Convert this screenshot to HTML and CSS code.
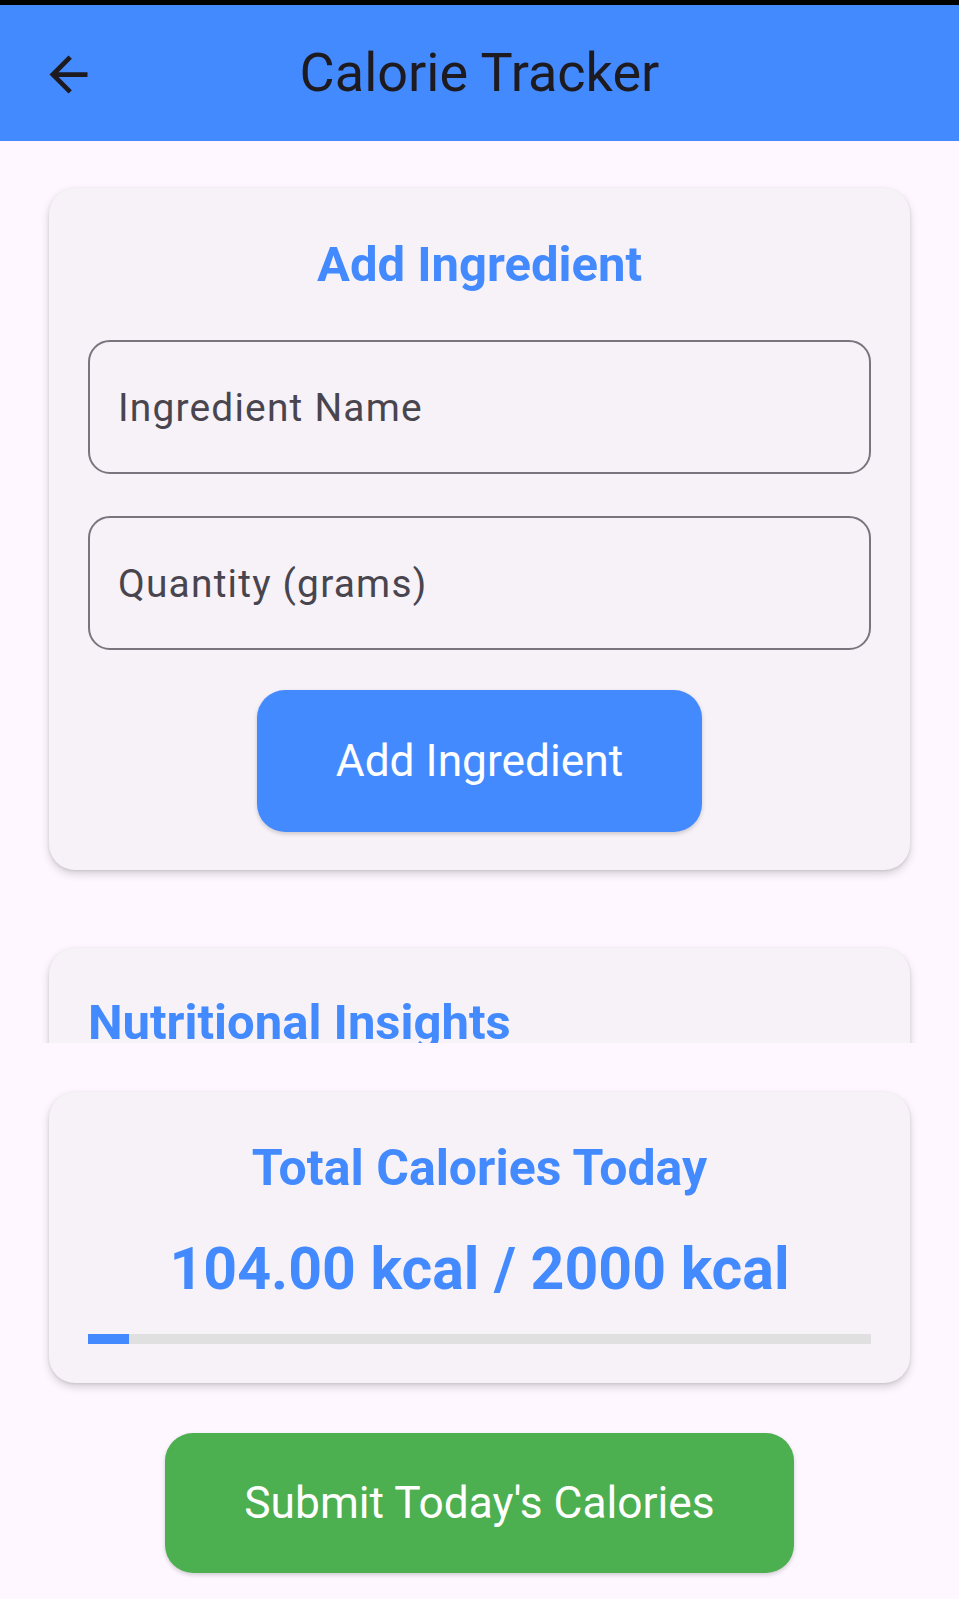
FILE: index.html
```html
<!DOCTYPE html>
<html lang="en">
<head>
<meta charset="utf-8">
<title>Calorie Tracker</title>
<link rel="stylesheet" href="styles.css">
</head>
<body>
<div class="screen">
  <div class="status-bar"></div>
  <header class="app-bar">
    <div class="app-bar-lead">
      <svg class="back-icon" viewBox="0 0 24 24" width="57" height="57" aria-hidden="true">
        <path d="M20 11H7.83l5.59-5.59L12 4l-8 8 8 8 1.41-1.41L7.83 13H20v-2z" fill="#1d1b20"/>
      </svg>
    </div>
    <h1 class="app-title">Calorie Tracker</h1>
    <div></div>
  </header>

  <main class="scroll-area">
    <section class="card card-add">
      <h2 class="card-title center">Add Ingredient</h2>
      <div class="field"><span class="field-label">Ingredient Name</span></div>
      <div class="field field-second"><span class="field-label">Quantity (grams)</span></div>
      <div class="btn-row">
        <button class="btn btn-blue">Add Ingredient</button>
      </div>
    </section>

    <section class="card card-insights">
      <h2 class="card-title">Nutritional Insights</h2>
    </section>
  </main>

  <footer class="bottom-area">
    <section class="card card-total">
      <h2 class="card-title card-title-lg center">Total Calories Today</h2>
      <div class="kcal">104.00 kcal / 2000 kcal</div>
      <div class="progress"><div class="progress-fill" style="width:5.2%"></div></div>
    </section>
    <div class="btn-row submit-row">
      <button class="btn btn-green">Submit Today's Calories</button>
    </div>
  </footer>
</div>
</body>
</html>
```

FILE: styles.css
```css
* {
  box-sizing: border-box;
}

html, body {
  margin: 0;
  padding: 0;
}

body {
  background: #fef7ff;
  font-family: Roboto, "Liberation Sans", Arial, sans-serif;
  width: 959px;
  height: 1599px;
  overflow: hidden;
}

.screen {
  display: flex;
  flex-direction: column;
  height: 1599px;
}

.status-bar {
  height: 5px;
  background: #000;
  flex: none;
}

.app-bar {
  flex: none;
  height: 136px;
  background: #448aff;
  display: grid;
  grid-template-columns: 1fr auto 1fr;
  align-items: center;
}

.app-bar-lead {
  padding-left: 40px;
  display: flex;
  align-items: center;
  padding-top: 2px;
}

.back-icon {
  display: block;
}

.app-title {
  margin: 0;
  font-size: 54px;
  font-weight: 400;
  color: #1d1b20;
  line-height: 136px;
}

.scroll-area {
  flex: none;
  height: 902px;
  overflow: hidden;
  padding: 47px 49px 0;
  display: flex;
  flex-direction: column;
  gap: 78px;
}

.card {
  background: #f6f2f8;
  border-radius: 26px;
  box-shadow: 0 4px 8px rgba(0, 0, 0, 0.16), 0 1px 3px rgba(0, 0, 0, 0.10);
  padding: 0 39px;
}

.card-title {
  margin: 0;
  font-size: 49px;
  font-weight: 700;
  line-height: 60px;
  color: #448aff;
}

.card-title-lg {
  font-size: 50px;
}

.center {
  text-align: center;
}

.card-add {
  flex: none;
  padding-top: 47px;
  padding-bottom: 38px;
}

.card-add .card-title {
  margin-bottom: 45px;
}

.field {
  height: 134px;
  border: 2px solid #79747e;
  border-radius: 22px;
  display: flex;
  align-items: center;
  padding-left: 28px;
}

.field-second {
  margin-top: 42px;
}

.field-label {
  font-size: 38.9px;
  letter-spacing: 1.2px;
  color: #49454f;
}

.btn-row {
  display: flex;
  justify-content: center;
  margin-top: 40px;
}

.btn {
  border: none;
  height: 142px;
  padding: 0 79px;
  border-radius: 28px;
  font-family: inherit;
  font-size: 44.3px;
  font-weight: 400;
  color: #fff;
  box-shadow: 0 2px 4px rgba(0, 0, 0, 0.18);
}

.btn-blue {
  background: #448aff;
}

.btn-green {
  background: #4caf50;
}

.card-insights {
  flex: none;
  padding-top: 45px;
  padding-bottom: 200px;
}

.bottom-area {
  flex: none;
  padding: 49px 49px 0;
}

.card-total {
  padding-top: 46px;
  padding-bottom: 39px;
}

.kcal {
  margin-top: 36px;
  text-align: center;
  font-size: 59px;
  font-weight: 700;
  line-height: 70px;
  color: #448aff;
}

.progress {
  margin-top: 30px;
  height: 10px;
  background: #e0e0e0;
}

.progress-fill {
  height: 100%;
  background: #448aff;
}

.submit-row {
  margin-top: 50px;
}

.submit-row .btn {
  height: 140px;
}
```
